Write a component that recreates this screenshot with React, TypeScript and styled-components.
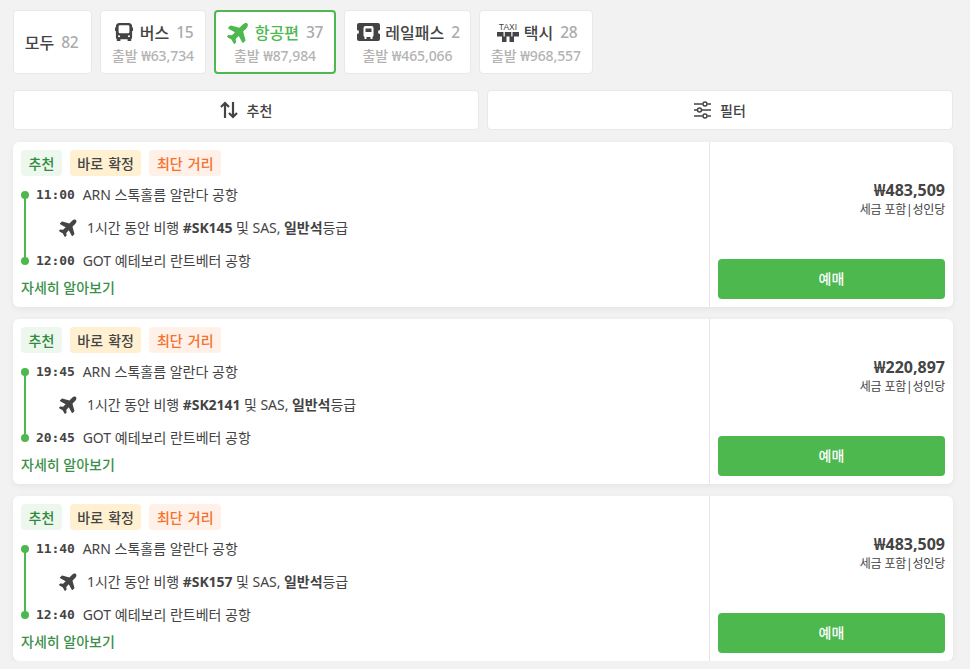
import React from "react";
import styled, { createGlobalStyle } from "styled-components";
import { FaPlane } from "react-icons/fa";

const Global = createGlobalStyle`
  html, body { margin: 0; padding: 0; background: #f2f2f2; }
  body { font-family: "Noto Sans", "Noto Sans CJK KR", sans-serif; color: #444; }
`;
const Page = styled.div`
  padding: 10px 17px 0 13px;
  display: flex;
  flex-direction: column;
  gap: 12px;
`;
const Tabs = styled.div`
  display: flex;
  gap: 8px;
  margin-bottom: 4px;
`;
const Tab = styled.div<{ $active?: boolean; $w: number }>`
  box-sizing: border-box;
  width: ${(p) => p.$w}px;
  height: 64px;
  background: #fff;
  border-radius: 4px;
  border: ${(p) => (p.$active ? "2px solid #4cb84e" : "1px solid #e8e8e8")};
  display: flex;
  flex-direction: column;
  align-items: center;
  justify-content: center;
  gap: 3px;
`;
const TabTop = styled.div<{ $active?: boolean; $plain?: boolean }>`
  display: flex;
  align-items: center;
  gap: 5px;
  height: 24px;
  padding-left: ${(p) => (p.$plain ? "0" : "2px")};
  margin-right: ${(p) => (p.$plain ? "2px" : "0")};
  font-size: 16px;
  font-weight: 500;
  color: ${(p) => (p.$active ? "#4cb84e" : "#444")};
  svg { display: block; flex: none; }
`;
const Count = styled.span`
  margin-left: 2px;
  font-size: 15.5px;
  letter-spacing: -0.3px;
  color: #aaa;
  font-weight: 500;
`;
const Sub = styled.div`
  font-size: 14px;
  line-height: 18px;
  letter-spacing: -0.1px;
  font-weight: 500;
  color: #b3b3b3;
`;
const SortRow = styled.div`
  display: flex;
  gap: 8px;
`;
const SortButton = styled.div`
  box-sizing: border-box;
  flex: 1;
  height: 40px;
  padding-bottom: 1px;
  background: #fff;
  border: 1px solid #e8e8e8;
  border-radius: 4px;
  display: flex;
  align-items: center;
  justify-content: center;
  gap: 9px;
  font-size: 14px;
  font-weight: 500;
  color: #444;
`;
const Card = styled.div`
  display: flex;
  height: 165px;
  background: #fff;
  border-radius: 6px;
  box-shadow: 0 2px 6px rgba(0, 0, 0, 0.06);
`;
const Main = styled.div`
  box-sizing: border-box;
  width: 697px;
  padding: 8px;
  border-right: 1px solid #e6e6e6;
  display: flex;
  flex-direction: column;
`;
const Badges = styled.div`
  display: flex;
  gap: 8px;
  height: 26px;
`;
const Badge = styled.span<{ $bg: string; $fg: string }>`
  display: flex;
  align-items: center;
  padding: 0 7.5px 1px;
  word-spacing: 1.5px;
  border-radius: 4px;
  background: ${(p) => p.$bg};
  color: ${(p) => p.$fg};
  font-size: 14px;
  font-weight: 500;
`;
const Route = styled.div`
  position: relative;
  margin-top: 7px;
  padding-left: 15px;
`;
const Line = styled.div`
  position: absolute;
  left: 3px;
  top: 12px;
  height: 66px;
  width: 2px;
  background: #4cb84e;
  &::before, &::after {
    content: "";
    position: absolute;
    left: -3px;
    width: 8px;
    height: 8px;
    border-radius: 50%;
    background: #4cb84e;
  }
  &::before { top: -4px; }
  &::after { bottom: -4px; }
`;
const Stop = styled.div`
  display: flex;
  align-items: center;
  gap: 8px;
  height: 22px;
  font-size: 14px;
`;
const Time = styled.span`
  font-family: "DejaVu Sans Mono", monospace;
  font-weight: 700;
  font-size: 13px;
  letter-spacing: -0.1px;
`;
const Flight = styled.div`
  display: flex;
  align-items: center;
  height: 44px;
  padding-left: 23px;
  gap: 8px;
  font-size: 14px;
  letter-spacing: -0.05px;
  b { font-weight: 700; }
`;
const More = styled.div`
  margin-top: 6px;
  font-size: 14px;
  font-weight: 500;
  color: #3c8f4a;
`;
const Side = styled.div`
  flex: 1;
  padding: 8px;
  display: flex;
  flex-direction: column;
  align-items: stretch;
  justify-content: space-between;
`;
const PriceBlock = styled.div`
  margin-top: 30px;
  text-align: right;
`;
const Price = styled.div`
  font-size: 16px;
  font-weight: 700;
  line-height: 20px;
`;
const Note = styled.div`
  font-size: 12px;
  line-height: 20px;
  letter-spacing: -0.2px;
`;
const Buy = styled.div`
  height: 40px;
  padding-bottom: 3px;
  box-sizing: border-box;
  border-radius: 4px;
  background: #4cb84e;
  color: #fff;
  font-size: 14px;
  font-weight: 500;
  display: flex;
  align-items: center;
  justify-content: center;
`;

const Bus = () => (
  <svg width="18" height="20" viewBox="0 0 20 22" style={{ marginRight: 2 }}>
    <path fill="#444" fillRule="evenodd" d="M5 1h10a4 4 0 0 1 4 4v1h1v4h-1v7a2 2 0 0 1-1 1.700V21h-4v-2H6v2H2v-2.300A2 2 0 0 1 1 17v-7H0V6h1V5a4 4 0 0 1 4-4zM5.500 3.500A1.500 1.500 0 0 0 4 5v6a1.500 1.500 0 0 0 1.500 1.500h9A1.500 1.500 0 0 0 16 11V5a1.500 1.500 0 0 0-1.500-1.500zM4.500 14.500a1.200 1.200 0 1 0 0 2.400 1.200 1.200 0 0 0 0-2.400zM15.500 14.500a1.200 1.200 0 1 0 0 2.400 1.200 1.200 0 0 0 0-2.400z" />
  </svg>
);
const Ticket = () => (
  <svg width="23" height="20" viewBox="0 0 23 20">
    <path fill="#444" d="M2 1h19a2 2 0 0 1 2 2v5a2 2 0 0 0 0 4v5a2 2 0 0 1-2 2H2a2 2 0 0 1-2-2v-5a2 2 0 0 0 0-4V3a2 2 0 0 1 2-2z" />
    <path fill="#fff" fillRule="evenodd" d="M8.500 4h6A2 2 0 0 1 16.500 6v7.500a1.500 1.500 0 0 1-1 1.400V17H13.500v-2h-4v2H7.500v-2.100a1.500 1.500 0 0 1-1-1.400V6a2 2 0 0 1 2-2zM8.500 6.500v3.500h6V6.500z" />
  </svg>
);
const Taxi = () => (
  <svg width="22" height="20" viewBox="0 0 22 20">
    <text x="11" y="7.500" textAnchor="middle" fontSize="8.500" fontFamily="Liberation Sans" fill="#444">TAXI</text>
    <path fill="#444" d="M0 10h6.500v4.500H0zM7.800 10h6.500v4.500H7.800zM15.500 10H22v4.500h-6.500zM5 14.500h4.500V20H5zM12.500 14.500H17V20h-4.500z" />
  </svg>
);
const SortArrows = () => (
  <svg width="18" height="18" viewBox="0 0 18 18" fill="none" stroke="#444" strokeWidth="2.200">
    <path d="M5 17V2M1 6l4-4 4 4M13 1v15M9 12l4 4 4-4" />
  </svg>
);
const Sliders = () => (
  <svg width="17" height="18" viewBox="0 0 17 18" fill="none" stroke="#444" strokeWidth="1.500">
    <path d="M0 3h8.500M13.500 3H17M0 9h3M8 9h9M0 15h8.500M13.500 15H17" />
    <circle cx="11" cy="3" r="2" />
    <circle cx="5.500" cy="9" r="2" />
    <circle cx="11" cy="15" r="2" />
  </svg>
);

const tickets = [
  { a: "11:00", b: "12:00", no: "#SK145", price: "₩483,509" },
  { a: "19:45", b: "20:45", no: "#SK2141", price: "₩220,897" },
  { a: "11:40", b: "12:40", no: "#SK157", price: "₩483,509" },
];

export default function App() {
  return (
    <Page>
      <Global />
      <Tabs>
        <Tab $w={79}>
          <TabTop $plain>모두<Count>82</Count></TabTop>
        </Tab>
        <Tab $w={106}>
          <TabTop><Bus />버스<Count>15</Count></TabTop>
          <Sub>출발 ₩63,734</Sub>
        </Tab>
        <Tab $w={122} $active>
          <TabTop $active><FaPlane size={24} color="#4cb84e" style={{ transform: "rotate(-45deg)", margin: "0 -1px 0 -2px" }} />항공편<Count>37</Count></TabTop>
          <Sub>출발 ₩87,984</Sub>
        </Tab>
        <Tab $w={127}>
          <TabTop><Ticket />레일패스<Count>2</Count></TabTop>
          <Sub>출발 ₩465,066</Sub>
        </Tab>
        <Tab $w={114}>
          <TabTop><Taxi />택시<Count>28</Count></TabTop>
          <Sub>출발 ₩968,557</Sub>
        </Tab>
      </Tabs>
      <SortRow>
        <SortButton><SortArrows />추천</SortButton>
        <SortButton><Sliders />필터</SortButton>
      </SortRow>
      {tickets.map((t) => (
        <Card key={t.no}>
          <Main>
            <Badges>
              <Badge $bg="#edf7ee" $fg="#2e8b3c">추천</Badge>
              <Badge $bg="#fff0d2" $fg="#444">바로 확정</Badge>
              <Badge $bg="#fff0e8" $fg="#f4712b">최단 거리</Badge>
            </Badges>
            <Route>
              <Line />
              <Stop><Time>{t.a}</Time>ARN 스톡홀름 알란다 공항</Stop>
              <Flight>
                <FaPlane size={20} style={{ transform: "rotate(-45deg)" }} />
                <span>1시간 동안 비행 <b>{t.no}</b> 및 SAS, <b>일반석</b>등급</span>
              </Flight>
              <Stop><Time>{t.b}</Time>GOT 예테보리 란트베터 공항</Stop>
            </Route>
            <More>자세히 알아보기</More>
          </Main>
          <Side>
            <PriceBlock>
              <Price>{t.price}</Price>
              <Note>세금 포함|성인당</Note>
            </PriceBlock>
            <Buy>예매</Buy>
          </Side>
        </Card>
      ))}
    </Page>
  );
}
